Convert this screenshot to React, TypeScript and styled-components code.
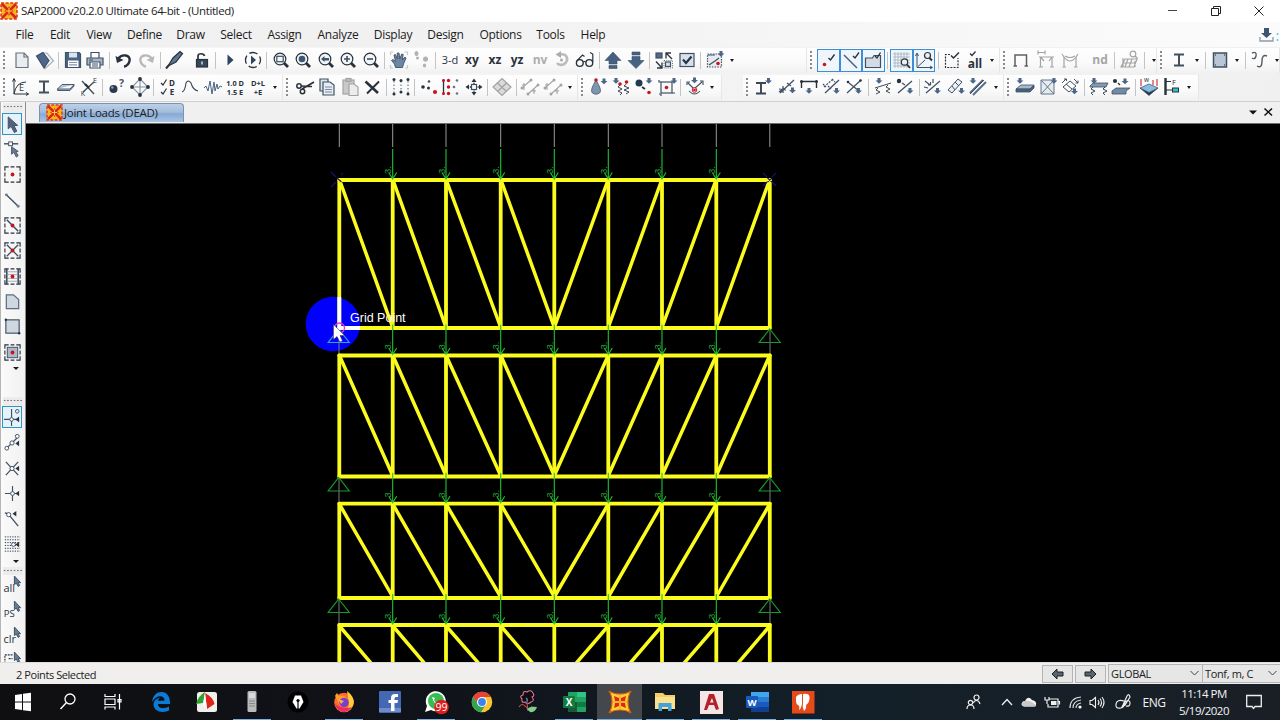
import * as React from 'react'
import styled, { createGlobalStyle } from 'styled-components'

const GlobalStyle = createGlobalStyle`
  * {
    box-sizing: border-box;
  }
  body {
    margin: 0;
    overflow: hidden;
    background: #000;
    font-family: 'Open Sans', 'Noto Sans', sans-serif;
  }
`

const DARK = '#3f5063'
const INK = '#29323c'
const GREY = '#a4a4a4'
const RED = '#c8141c'

/* ---------- layout ---------- */

const Window = styled.div`
  width: 1280px;
  height: 720px;
  display: flex;
  flex-direction: column;
  overflow: hidden;
  background: #f0f0f0;
  color: #1c1c1c;
`

const TitleBar = styled.header`
  height: 22px;
  flex: none;
  display: flex;
  align-items: center;
  padding-left: 1px;
  background: #fff;
`

const TitleText = styled.span`
  flex: 1;
  padding-left: 4px;
  font-size: 11.5px;
  letter-spacing: -0.39px;
  line-height: 22px;
  white-space: nowrap;
`

const WindowButton = styled.span`
  width: 43px;
  height: 20px;
  display: flex;
  align-items: center;
  justify-content: center;
`

const MenuBar = styled.nav`
  height: 25px;
  flex: none;
  display: flex;
  align-items: center;
  padding-left: 7px;
  background: linear-gradient(90deg, #f0f0f0 0, #f1f1f1 30%, #fbfbfb 100%);
`

const MenuItem = styled.span<{ $w: number }>`
  width: ${(props) => props.$w}px;
  text-align: center;
  font-size: 12px;
  letter-spacing: -0.3px;
  white-space: nowrap;
`

const MenuEnd = styled.span`
  margin-left: auto;
  width: 24px;
  height: 20px;
`

const ToolRow = styled.div`
  height: 27px;
  flex: none;
  display: flex;
  padding-top: 1px;
  background: linear-gradient(90deg, #f6f6f6 0, #f3f3f3 60%, #f0f0f0 100%);
`

const Strip = styled.div<{ $w: number; $after?: number }>`
  width: ${(props) => props.$w}px;
  height: 25px;
  margin-right: ${(props) => props.$after || 0}px;
  flex: none;
  display: flex;
  align-items: center;
  overflow: hidden;
  background: linear-gradient(#fefefe, #fafafa 60%, #f1f1f1);
  border-right: 1px solid #e6e6e6;
`

const Grip = styled.span<{ $w: number }>`
  width: ${(props) => props.$w}px;
  height: 21px;
  flex: none;
  background: radial-gradient(circle, #8a8a8a 0.8px, transparent 1.2px) 2px 0 / 4px 4px repeat-y;
`

const ToolButton = styled.span<{ $w: number; $on?: boolean }>`
  width: ${(props) => props.$w}px;
  height: 23px;
  flex: none;
  display: flex;
  align-items: center;
  justify-content: center;
  padding-bottom: ${(props) => (props.$on ? 0 : 1)}px;
  font-size: 12px;
  border: ${(props) => (props.$on ? '1px solid #3c8fd6' : '0')};
  background: ${(props) => (props.$on ? '#eef5fb' : 'transparent')};
`

const Divider = styled.span<{ $w: number; $hidden?: boolean }>`
  width: ${(props) => props.$w}px;
  height: 17px;
  flex: none;
  background: ${(props) =>
    props.$hidden ? 'none' : 'linear-gradient(#c4c4c4, #c4c4c4) center / 1px 100% no-repeat'};
`

const Caret = styled.span<{ $w: number }>`
  width: ${(props) => props.$w}px;
  flex: none;
  display: flex;
  justify-content: center;
  &::after {
    content: '';
    border: 2.5px solid transparent;
    border-top: 3px solid #1b1b1b;
    border-bottom-width: 0;
  }
`

const Body = styled.main`
  height: 561px;
  flex: none;
  display: flex;
  border-top: 1px solid #cfcfcf;
`

const SideBar = styled.aside`
  width: 26px;
  flex: none;
  display: flex;
  flex-direction: column;
  overflow: hidden;
  padding: 1px 2px 0 2px;
  background: linear-gradient(90deg, #fafafa, #f1f1f1);
  border-right: 1px solid #8c8c8c;
  border-left: 1px solid #b5b5b5;
`

const SideGrip = styled.span<{ $h: number }>`
  height: ${(props) => props.$h}px;
  flex: none;
  background: radial-gradient(circle, #777 0.7px, transparent 1.1px) 0 2px / 3.3px 3px repeat-x #ececec;
`

const SideButton = styled.span<{ $on?: boolean }>`
  width: 20px;
  height: 22px;
  margin-bottom: 3.35px;
  margin-left: -1px;
  flex: none;
  display: flex;
  align-items: center;
  justify-content: center;
  border: ${(props) => (props.$on ? '1px solid #2f95c4' : '0')};
  background: ${(props) => (props.$on ? '#e6f2fa' : 'transparent')};
`

const SideCaret = styled.span<{ $h: number }>`
  height: ${(props) => props.$h}px;
  flex: none;
  padding-top: 1px;
  padding-left: 10px;
  &::after {
    content: '';
    display: block;
    width: 0;
    border: 3px solid transparent;
    border-top-color: #1b1b1b;
    border-bottom-width: 0;
  }
`

const Workspace = styled.section`
  flex: 1;
  display: flex;
  flex-direction: column;
`

const TabRow = styled.div`
  height: 22px;
  flex: none;
  display: flex;
  align-items: flex-start;
  padding: 1px 6px 0 13px;
  background: #f0f0f0;
  border-bottom: 1px solid #6e6e6e;
`

const Tab = styled.div`
  width: 145px;
  height: 19px;
  display: flex;
  align-items: center;
  gap: 2px;
  padding-left: 7px;
  padding-bottom: 1px;
  font-size: 11.5px;
  letter-spacing: -0.3px;
  white-space: nowrap;
  border: 1px solid #7c93ae;
  border-bottom: 0;
  border-radius: 4px 4px 0 0;
  background: linear-gradient(#bdd0e8, #a2bddd 45%, #87a9d2 55%, #a9c5e4);
`

const TabTools = styled.span`
  margin-left: auto;
  width: 32px;
  height: 20px;
  margin-top: -2px;
`

const StatusBar = styled.footer`
  height: 22px;
  flex: none;
  display: flex;
  align-items: center;
  font-size: 11px;
  background: #f0efee;
  border-top: 1px solid #dcdcdc;
`

const StatusText = styled.span`
  flex: 1;
  padding-left: 16px;
  padding-top: 1px;
  font-size: 11px;
  letter-spacing: -0.42px;
`

const NavButton = styled.span`
  width: 31px;
  height: 18px;
  margin-right: 2px;
  display: flex;
  align-items: center;
  justify-content: center;
  border: 1px solid #b4b4b4;
  background: #e6e6e6;
`

const Combo = styled.span<{ $w: number }>`
  width: ${(props) => props.$w}px;
  height: 19px;
  display: flex;
  align-items: center;
  justify-content: space-between;
  padding: 0 3px 1px 2px;
  overflow: hidden;
  white-space: nowrap;
  font-size: 11px;
  letter-spacing: -0.35px;
  border: 1px solid #b4b4b4;
  border-right: 0;
  background: #e6e6e6;
`

const TaskBar = styled.div`
  height: 36px;
  flex: none;
  display: flex;
  background: linear-gradient(90deg, #0f0f11 0, #10131a 35%, #132029 65%, #1a1f26 100%);
  color: #f4f4f4;
`

const TaskButton = styled.span<{ $w: number; $open?: boolean; $active?: boolean }>`
  width: ${(props) => props.$w}px;
  height: 36px;
  flex: none;
  display: flex;
  align-items: center;
  justify-content: center;
  background:
    linear-gradient(#76b0e4, #76b0e4) center bottom / ${(props) => (props.$open ? (props.$active ? 45 : 38) : 0)}px 1.5px no-repeat,
    ${(props) => (props.$active ? '#44474b' : 'transparent')};
`

const Tray = styled.div`
  margin-left: auto;
  width: 322px;
  display: flex;
  align-items: center;
`

const TrayItem = styled.span<{ $w: number }>`
  width: ${(props) => props.$w}px;
  flex: none;
  display: flex;
  align-items: center;
  justify-content: center;
  font-size: 12px;
  letter-spacing: -0.4px;
`

const Clock = styled.span`
  width: 58px;
  margin-right: 4px;
  padding-right: 2px;
  text-align: center;
  font-size: 11.5px;
  line-height: 17px;
  letter-spacing: -0.5px;
  white-space: nowrap;
`

/* ---------- icon helpers ---------- */

const Svg = styled.svg`
  display: block;
  flex: none;
  overflow: visible;
`

interface IconProps {
  size?: number,
  children: React.ReactNode
}

const Icon = ({ size = 20, children }: IconProps) => (
  <Svg width={size} height={size} viewBox="0 0 20 20" fill="none" stroke={DARK} strokeWidth="1.2">
    {children}
  </Svg>
)

const Mark = ({ size = 16 }: { size?: number }) => (
  <Svg width={size} height={size} viewBox="0 0 24 24">
    <path d="M1 1C7 5 17 5 23 1C19 7 19 17 23 23C17 19 7 19 1 23C5 17 5 7 1 1Z" fill="#ffd52e" stroke="#dc5b16" strokeWidth="1.2" />
    <path d="M6 6L11 8V11H7ZM18 6L13 8V11H17ZM6 18L11 16V13H7ZM18 18L13 16V13H17Z" fill="#e2251b" />
    <path d="M12 4.500V19.500M5 12H19" stroke="#f08a20" strokeWidth=".8" />
  </Svg>
)

// square version used in the title bar and on the document tab
const SmallMark = ({ size = 15 }: { size?: number }) => (
  <Svg width={size} height={size} viewBox="0 0 16 16">
    <rect width="16" height="16" fill="#f6b61f" />
    <path d="M0 0H16V16H0Z" fill="none" stroke="#e0381a" strokeWidth="1.6" strokeDasharray="3 1.600" />
    <path d="M1 1L15 15M15 1L1 15" stroke="#d8261c" strokeWidth="2.600" />
    <path d="M8 3L9.500 6.500L13 8L9.500 9.500L8 13L6.500 9.500L3 8L6.500 6.500Z" fill="#e02a1b" />
    <path d="M8 5V11M5 8H11" stroke="#ffd83a" />
  </Svg>
)

const Dot = ({ x, y, r = 1.8, c = RED }: { x: number, y: number, r?: number, c?: string }) => (
  <circle cx={x} cy={y} r={r} fill={c} stroke="none" />
)

// small blue arrow used by every "assign" tool
const Down = ({ x, y }: { x: number, y: number }) => (
  <path d={`M${x - 1.5} ${y - 3}h3v2.500h2l-3.500 3.200l-3.500 -3.200h2z`} fill="#4a6788" stroke="none" />
)

const Word = ({ x = 10, y = 14, size = 12, bold, c = INK, children }: { x?: number, y?: number, size?: number, bold?: boolean, c?: string, children: string }) => (
  <text x={x} y={y} fontSize={size} fontWeight={bold ? 700 : 400} textAnchor="middle" fill={c} stroke="none">{children}</text>
)

const Lens = ({ children }: { children?: React.ReactNode }) => (
  <>
    <path d="M13 13L17 17" strokeWidth="2.800" stroke={INK} />
    <circle cx="9" cy="9" r="5.800" fill="#f2f5f8" stroke={INK} strokeWidth="1.200" />
    {children}
  </>
)

const icons: Record<string, React.ReactNode> = {
  file: <path d="M4 3H12L16 7V17.500H4ZM12 3V7H16" fill="#e9edf1" stroke="#68727d" />,
  open: <><path d="M7 3L12 3L18.500 11L10 18.500Z" fill="#f4f7fa" stroke="#a5b0bb" /><path d="M1.500 6L8 2.500L14 10.500L9 18Z" fill="#4b6688" stroke={DARK} /></>,
  save: <><path d="M2.500 2.500H16L17.500 4V17.500H2.500Z" fill="#4b6384" /><rect x="6" y="2.500" width="8" height="5" fill="#dce4ed" stroke="none" /><rect x="5" y="10.500" width="10.500" height="6.500" fill="#fff" stroke="none" /><path d="M6 12.500H14M6 14.800H14" stroke="#8796a8" /></>,
  print: <><path d="M6 8V2.500H14V8" fill="#fff" /><path d="M2 8H18V15H2Z" fill="#a5b6c9" /><path d="M5 12H15V18H5Z" fill="#fff" /><path d="M7 14H13M7 16H13M4 10H8" /></>,
  undo: <><path d="M4 9C8 3 17 5 15.500 11C15 14 12 16.500 10 16.500" stroke={INK} strokeWidth="2.400" /><path d="M1.500 6L3 13L9.500 10Z" fill={INK} stroke="none" /></>,
  redo: <><path d="M16 9C12 3 3 5 4.500 11C5 14 8 16.500 10 16.500" stroke="#b9b9b9" strokeWidth="2.400" /><path d="M18.500 6L17 13L10.500 10Z" fill="#b9b9b9" stroke="none" /></>,
  pen: <><path d="M4 16L9 8L16 1.500L18.500 3.500L12 12Z" fill="#5c7593" stroke={INK} /><path d="M2 18.500L5 15" strokeWidth="2" stroke={INK} /></>,
  lock: <><path d="M6 9V6C6 3 12 3 12.500 6" stroke={INK} strokeWidth="1.700" /><rect x="4.500" y="9.500" width="11" height="7.500" fill="#37475b" stroke={INK} /><rect x="9.300" y="11.500" width="1.400" height="3" fill="#dfe5ec" stroke="none" /></>,
  play: <path d="M7.500 4.500L13.500 10L7.500 15.500Z" fill="#2c4564" stroke="none" />,
  cycle: <><circle cx="10" cy="10" r="7.500" stroke={INK} strokeWidth="1.300" strokeDasharray="8.500 3.280" strokeDashoffset="4" /><path d="M8 5.500L13 10L8 14.500Z" fill="#2c4564" stroke="none" /></>,
  zoomRect: <Lens><rect x="5.800" y="6.300" width="6.400" height="5.400" /></Lens>,
  zoomAll: <Lens><circle cx="9" cy="9" r="3.300" fill="#3f5673" stroke="none" /></Lens>,
  zoomPrev: <Lens><path d="M5 9L8.500 6V8H13V10.500H8.500V12Z" fill="#3f5673" stroke="none" /></Lens>,
  zoomIn: <Lens><path d="M6 9H12M9 6V12" strokeWidth="1.600" /></Lens>,
  zoomOut: <Lens><path d="M6 9H12" strokeWidth="1.600" /></Lens>,
  hand: <><path d="M6.500 17.500L5.500 14L2.500 10.500L4 9.500L6.500 11.500L5 5L6.500 4.500L8.300 9L8.300 3H10L10.800 9L12.700 4L14.200 4.500L13.300 10L16 7L17 8L14.500 14L13.500 17.500Z" fill="#6d86a3" stroke="#3b5069" strokeWidth=".9" /><path d="M1.500 5V2H4.500M15.500 2H18.500V5M1.500 15V18H4M16 18H18.500V15" stroke="#c2c9d0" /></>,
  feet: <><ellipse cx="4.500" cy="3.500" rx="2" ry="2.600" fill="#b2b2b2" stroke="none" /><ellipse cx="5.500" cy="8" rx="1.500" ry="1.500" fill="#b2b2b2" stroke="none" /><ellipse cx="13.500" cy="9" rx="2.500" ry="2.600" fill="#b2b2b2" stroke="none" /><ellipse cx="12.500" cy="15.500" rx="1.600" ry="2" fill="#b2b2b2" stroke="none" /></>,
  d3: <Word size={11}>3-d</Word>,
  xy: <Word size={12} bold>xy</Word>,
  xz: <Word size={12} bold>xz</Word>,
  yz: <Word size={12} bold>yz</Word>,
  nv: <Word size={12} bold c="#adadad">nv</Word>,
  rotate: <><path d="M8 4.500C14.500 3 17 9 13.500 13C10.500 16 6.500 15 5 13" stroke="#bcbcbc" strokeWidth="2.600" /><path d="M9 1L3.500 4.500L9 8Z" fill="#adadad" stroke="none" /><Dot x={9.500} y={10} r={1.500} c="#aaa" /></>,
  glasses: <><circle cx="4.800" cy="13" r="3.400" stroke={INK} strokeWidth="1.400" /><circle cx="14.300" cy="13" r="3.400" stroke={INK} strokeWidth="1.400" /><path d="M8.300 12Q9.500 11 10.800 12M1.800 11L7.500 5L9.500 6.500M17.800 12V4L15 2.500" stroke={INK} /></>,
  up: <path d="M10 2L18 10.500H14V14H6V10.500H2ZM6 15.500H14V18.500H6Z" fill="#476181" stroke="#3a4f69" strokeWidth=".6" />,
  down: <path d="M10 18.500L18 10.500H14V6.500H6V10.500H2ZM6 2H14V5H6Z" fill="#476181" stroke="#3a4f69" strokeWidth=".6" />,
  shrink: <><rect x="2" y="3" width="6" height="5" fill="#536b8b" /><path d="M12 8.500V3H17M12 3L18 9M2 11.500L8 18M8 12.500V18H3" stroke={INK} strokeWidth="1.300" /><rect x="11.500" y="12" width="5" height="4.500" fill="#d8dfe8" /><path d="M10 10.500H18.500V18H10Z" strokeDasharray="1 1.200" strokeWidth=".8" /></>,
  check: <><rect x="3" y="3.500" width="14" height="13" fill="#d9e1ea" /><path d="M6 9.500L9 13L14.500 6.500" stroke="#27374b" strokeWidth="2.200" /></>,
  setView: <><rect x="2.500" y="4" width="14" height="13" strokeDasharray="1.500 1.200" fill="#e7ebf0" /><path d="M3 5H10M4 15L10 11L14 8" /><Down x={16} y={4} /><Dot x={13} y={13.500} /></>,
  jointOn: <><Dot x={6.500} y={13.500} /><path d="M10.500 7L12.500 9L16.500 3.500" stroke={INK} strokeWidth="1.400" /></>,
  lineOn: <><path d="M3 4L16 17" stroke="#4a6380" strokeWidth="1.500" /><path d="M12 5L14 7L18 1.500" stroke={INK} strokeWidth="1.300" /></>,
  areaOn: <><path d="M2.500 7H9.500L11 4.500H17.500V16.500H2.500Z" fill="#d4dbe5" /><path d="M12 5L14 7L17.500 1.500" stroke={INK} strokeWidth="1.300" /></>,
  grid: <><path d="M1 3H18M1 6H18M1 9H18M1 12H18M1 15H18M3 1V17M6 1V17M9 1V17M12 1V17M15 1V17" stroke="#a5afbb" strokeWidth=".8" /><circle cx="12.500" cy="11" r="3.200" fill="#eee" stroke={INK} /><path d="M15 13.500L18 17" stroke={INK} strokeWidth="1.800" /></>,
  axes: <><path d="M3 3V16.500H18M4 15.500L11 9M1.500 5L3 2L4.500 5M16 15L18.500 16.500L16 18" strokeWidth="1" /><circle cx="13.500" cy="4.500" r="3" fill="#eee" stroke={INK} /><path d="M15.500 7L18 9.500" stroke={INK} strokeWidth="1.800" /></>,
  selRect: <><path d="M8 4.500H3.500V17.500H16V8" stroke={INK} strokeDasharray="2 1.200" /><path d="M9 5.500L11.500 8L17 2.500" stroke={INK} strokeWidth="1.500" /></>,
  selAll: <><Word y={17.500} size={12} bold>all</Word><path d="M5 3.500L7 5.500L10.500 1.500" stroke={INK} strokeWidth="1.300" /></>,
  frame: <path d="M4 16V5H15.500V16M2.500 16H6M13.500 16H17" stroke="#5d6166" strokeWidth="1.500" />,
  frameDim: <path d="M4.500 17V7H16V17M2 2.500H9M2 .5V4.500M9 .5V4.500M3 17H7M14 17H18M4.500 7L8 11M16 7L13 11M3 7H18" stroke={GREY} />,
  frameBend: <path d="M4 17V7Q10 15 16 7V17M4 7L2 4M16 7L18 4M2.500 17H6M14 17H17.500M5 6Q10 9 15 6" stroke={GREY} />,
  nd: <Word size={12} c="#a5a5a5" bold>nd</Word>,
  mesh: <><path d="M1 17L5 9H17L14 17ZM3 13H16M8 9L5 17M12 9L9 17M3 8V17M15 11V17" stroke={GREY} /><circle cx="13" cy="4" r="2.800" stroke={GREY} /><path d="M15 6L17.500 8.500" stroke={GREY} strokeWidth="1.500" /></>,
  ibeam: <path d="M5 4.500H15M5 15.500H15M10 4.500V15.500" stroke="#44505e" strokeWidth="2" />,
  slab: <><rect x="3.500" y="3" width="13" height="14" fill="#b9c6d6" strokeWidth="1.500" /><path d="M5 5H6M14 5H15M5 15H6M14 15H15" stroke="#222" /></>,
  spline: <path d="M2 3Q7 1 6 6Q5 10 2 8M7 16Q12 19 12 11Q12 4 17 6" stroke="#4e5a68" strokeWidth="1.400" />,
  func: <><path d="M3 2V17H17.500M1.500 4.500L3 1.500L4.500 4.500M15 15.500L17.500 17L15 18.500M3 17Q5 5 15 5" stroke={INK} strokeWidth="1" /><Word x={10.500} y={14} size={9}>E</Word></>,
  plate: <path d="M1.500 12L6 7.500H18L14 12ZM1.500 12V13.500H14L18 9V7.500" fill="#b5c3d2" stroke="#465a70" strokeWidth="1" />,
  coords: <><path d="M3 4L15 17M15 5L4 15" strokeWidth="1.400" /><path d="M6 7L10 11" strokeWidth="2.200" stroke={INK} /><Word x={16} y={5.500} size={7}>E</Word><Word x={4} y={19} size={7}>K</Word></>,
  ball: <><Dot x={6.500} y={12} r={4} c="#293a50" /><Dot x={5.300} y={10.500} r={1.200} c="#8fa3bb" /><Word x={14.500} y={10} size={10.500} bold c="#42566e">?</Word></>,
  diamond: <><path d="M10 2L18 10L10 18L2 10ZM10 2V18M2 10H18" stroke="#8494a7" strokeWidth="1.100" />{[[10, 2], [18, 10], [10, 18], [2, 10]].map(([x, y]) => <Dot key={`${x}-${y}`} x={x} y={y} r={1.900} c={INK} />)}</>,
  de: <><Word x={14} y={8.500} size={8} bold>D</Word><Word x={14} y={17.500} size={8} bold>E</Word><path d="M3 6L5 8L8.500 2.500M3 15L5 17L8.500 11.500" stroke={INK} /></>,
  curve: <path d="M2 15Q5 14 6 6Q8 2 11 6Q13 13 18 14" stroke="#3d4753" strokeWidth="1.100" />,
  wave: <path d="M1 11L3 9L5 14L7 4L9 17L11 5L12 14L14 7L15 12L17 9L19 10" stroke="#4a6380" strokeWidth="1" />,
  combo1: <><Word y={9} size={7.300} bold>1.0 D</Word><Word y={17.500} size={7.300} bold>1.5 E</Word></>,
  combo2: <><Word y={9} size={7.500} bold>D+L</Word><Word y={17.500} size={7.500} bold>+E</Word></>,
  cut: <><path d="M19 5L7 12M17 9.500L6 9" stroke={INK} strokeWidth="1.700" /><circle cx="4" cy="9" r="2.200" stroke={INK} strokeWidth="1.500" /><circle cx="7.500" cy="14.500" r="2.200" stroke={INK} strokeWidth="1.500" /></>,
  copy: <><path d="M3 2H11V14H3Z" fill="#dce4ed" /><path d="M6 5H13L17 8V18H6Z" fill="#e7edf3" /><path d="M8 10H15M8 12.500H15M8 15H15" stroke="#7a8ca1" /></>,
  paste: <><rect x="3" y="3" width="11" height="14" fill="#c9c9c9" stroke={GREY} /><rect x="6" y="1.500" width="5" height="3" fill="#bbb" stroke={GREY} /><path d="M9 7H14L18 10V18.500H9Z" fill="#ececec" stroke={GREY} /></>,
  del: <><path d="M3.500 4.500L16 16" stroke={INK} strokeWidth="2.600" /><path d="M17 4.500L5 16.500" stroke={INK} strokeWidth="1.900" /></>,
  points: <><path d="M3 4V16M10 4V16M17 4V16" strokeDasharray="1.500 2" strokeWidth=".9" />{[3, 10, 17].map((x) => <g key={x}><Dot x={x} y={x === 10 ? 3.500 : 2.500} r={1.500} c={INK} /><Dot x={x} y={x === 10 ? 15 : 17} r={1.500} c={INK} /></g>)}</>,
  scatter: <><Dot x={4} y={10} c={INK} /><Dot x={10} y={4.500} c={DARK} r={1.300} /><Dot x={9.500} y={11} c={INK} r={1.500} /><Dot x={16} y={15} r={2.100} /></>,
  mirror: <><path d="M2.500 2V18" stroke={INK} strokeWidth="1.300" />{[3.500, 10, 16.500].map((y) => <g key={y}><Dot x={7.500} y={y} r={1.700} /><Dot x={y === 10 ? 13 : 16} y={y} r={1.300} c="#62758b" /></g>)}<Dot x={2.500} y={3.500} r={1.500} /><Dot x={2.500} y={16.500} r={1.500} /></>,
  move: <><path d="M10 3V17M3 10H17" stroke={INK} strokeWidth="1.300" strokeDasharray="2 .8" /><path d="M10 1.500L12.500 5H7.500ZM10 18.500L7.500 15H12.500ZM1.500 10L5 7.500V12.500ZM18.500 10L15 12.500V7.500Z" fill={INK} stroke="none" /><rect x="7.500" y="7.500" width="5" height="5" fill="#fff" /></>,
  panels: <path d="M10 1.500L19 10L10 18.500L1 10ZM5.500 6L14.500 14.500M14.500 6L5.500 14.500" fill="#dadada" stroke={GREY} />,
  divide: <><path d="M2 11L11 3M8 17L18 8M4 6V13M2 8H6M14 11V17M12 14H16" stroke={GREY} strokeWidth="1.100" /><Dot x={2} y={11} r={1.500} c={GREY} /><Dot x={11} y={3} r={1.500} c={GREY} /><Dot x={8} y={17} r={1.500} c={GREY} /><Dot x={18} y={8} r={1.500} c={GREY} /></>,
  drop: <><path d="M7 3Q1 13 3 15.500Q7 19 11 15.500Q13 13 7 3Z" fill="#7f95ae" stroke="#50657e" strokeWidth=".9" /><Dot x={7} y={3} /><Down x={15} y={4.500} /></>,
  springs: <><Down x={4} y={4} /><Dot x={8} y={7} /><Dot x={14.500} y={5} /><path d="M8 8L6 10L10 12L6 14L10 16L8 18M14.500 7L12 9L17 11L12 13L17 15L14 17" stroke={INK} strokeWidth=".9" /></>,
  masses: <><Dot x={5} y={6} r={3.500} c="#26384d" /><path d="M8 10L11 12" stroke={INK} strokeWidth="2" /><Dot x={15} y={15.500} /><Down x={15} y={4} /></>,
  panelZone: <><rect x="4" y="5" width="11" height="11" fill="#f5f7f9" /><Dot x={9.500} y={10.500} /><path d="M2 3V5H4M2 17H4V19M15 16H18" /><Down x={17} y={4} /></>,
  jointLoad: <><path d="M3 6L9 12L17 5M2 8V5H5M18 8V4H15M4 14Q9.500 20 15 14" strokeWidth="1.100" /><Down x={9.500} y={3.500} /><circle cx="9.500" cy="13" r="2.300" fill="#fff" stroke={RED} strokeWidth="1" /><Dot x={9.500} y={13} r={1.300} /></>,
  secAssign: <><path d="M2 6H12M2 16.500H12M7 6V16.500" stroke="#3a4654" strokeWidth="1.900" /><Down x={14.500} y={4} /></>,
  release: <><path d="M3 16L17 3M10 6L14 9M2 15L7 11M2 12L9 13M6 9L6 16" strokeWidth="1.200" /><Down x={15.500} y={13.500} /></>,
  offset: <><path d="M2.500 11V4.500H17.500V11" strokeWidth="1.400" stroke={INK} /><Dot x={2.500} y={4.500} c={INK} r={1.500} /><Dot x={17.500} y={4.500} c={INK} r={1.500} /><Down x={10} y={14} /></>,
  hatch: <><path d="M3 16L17 3" strokeWidth="1.300" /><path d="M2 10L11 2M6 9L9 12M1 7L4 10M10 2L13 5" strokeDasharray="2 1.200" /><Down x={14.500} y={14} /></>,
  cross: <><path d="M3 16L17 3M5 6L15 14" strokeWidth="1.200" /><Dot x={4} y={5} c={INK} r={1.300} /><Dot x={16.500} y={3.500} c={INK} r={1.300} /><Down x={14.500} y={14} /></>,
  lineSpring: <><path d="M2 11L18 6M5 11L3 13L7 15L3 17M15 8L13 10L17 12L13 14L17 16" stroke={INK} strokeWidth=".9" /><Down x={6} y={4} /></>,
  lineMass: <><Dot x={4} y={4} r={2.200} c={INK} /><path d="M3 16L17 4M7 6L10 8" strokeWidth="1.300" /><Down x={15} y={14} /></>,
  lineLoad: <><path d="M3 16L17 4M2 4L7 8M5 8H7.500V5M10 2V6M1 10L5 11" strokeWidth="1.200" /><Down x={14.500} y={14} /></>,
  distLoad: <><path d="M2 13L12 2L16 5L6 16ZM6 9L9 13M9 5L13 9" fill="#edf1f5" strokeWidth="1" /><Down x={15.500} y={14} /></>,
  temp: <><path d="M2 16L15 3M5 18L18 5" stroke="#5a6f89" strokeWidth="2" /><path d="M2 17L16 3" stroke={INK} strokeWidth=".8" /><Down x={5} y={4} /></>,
  areaSec: <><path d="M1 12L6 8H19L15 12Z" fill="#a8b8ca" strokeWidth=".8" /><path d="M1 12V15H15L19 11V8L15 12Z" fill="#48617f" strokeWidth=".8" /><Down x={5} y={4} /></>,
  areaBox: <><path d="M3 3H16V17H3ZM3 3L16 17M16 3L3 17" fill="#e6ebf0" stroke="#60748b" strokeWidth="1" /><Down x={16} y={4} /></>,
  areaRot: <><path d="M3 10L10 4L16 9L9 15ZM6 7L12 12M2 6L6 2M14 2L18 6M4 2H6.500V4M18 3.500V6H15.500" strokeWidth="1" /><Down x={14.500} y={14.500} /></>,
  areaSpring: <><path d="M1 9L4 6H19L17 10H1Z" fill="#8399b2" strokeWidth=".8" /><path d="M4 10L2 12L6 14L2 16L4 18M16 10L14 12L18 14L14 16L16 18" stroke={INK} strokeWidth=".9" /><Down x={5} y={4} /></>,
  areaMass: <><path d="M1 14L5 11H19L15 14V17H1Z" fill="#718aa6" strokeWidth=".8" /><Dot x={4} y={4} r={2.100} c={INK} /><path d="M7 6L9 8" stroke={INK} /><Down x={14} y={4.500} /></>,
  areaLoad: <><path d="M1 11L10 15L19 11L10 18.500Z" fill="#22384f" strokeWidth=".7" /><path d="M1 11L10 7L19 11L10 15.500Z" fill="#8abde0" strokeWidth=".7" /><path d="M2 2V9M18 2V9M14 3V8" stroke={RED} strokeWidth="1" /><Word x={7.500} y={5} size={6.500}>w</Word></>,
  cable: <><path d="M3.500 1V18" stroke={INK} strokeWidth="2.400" /><path d="M4 4.500H9M4 13H10" stroke={INK} strokeWidth="1" /><Word x={12} y={7.500} size={7.500}>F</Word><rect x="10.500" y="11" width="6" height="4" fill="#2fc4c4" stroke={INK} strokeWidth="1" /></>,
}

const PICK = <path d="M12 0V9L14 7.500L16 11L17.500 10L16 7H18.500Z" fill="#687c95" strokeWidth="1" />
const FENCE = <path d="M2 6V2H6M14 2H18V6M18 14V18H14M6 18H2V14M8 2H12M8 18H12M2 8V12M18 8V12" stroke={INK} strokeWidth="1.200" />

const sideIcons: Record<string, React.ReactNode> = {
  pointer: <path d="M5.500 2V14.500L8.500 12L12 18.500L14.500 17L11.500 11H15.500Z" fill="#53647a" stroke={DARK} strokeWidth="1" />,
  reshape: <><path d="M1 4H16" strokeWidth="1.500" /><rect x="6" y="2" width="4" height="4" fill="#fff" strokeWidth="1" /><path d="M9 7V15L11.500 13L14 18L16 16.500L13.500 12H16Z" fill="#697a90" strokeWidth=".9" /></>,
  joint: <>{FENCE}<Dot x={10} y={10} r={2} /></>,
  frame: <><path d="M3.500 4L16 16" strokeWidth="1.500" /><Dot x={3.500} y={4} c="#6d7c8e" r={1.500} /><Dot x={16} y={16} c="#6d7c8e" r={1.500} /></>,
  quickFrame: <>{FENCE}<path d="M4 4L16 16" strokeWidth="1.600" /><Dot x={10} y={10} r={2} /></>,
  brace: <>{FENCE}<path d="M4 4L16 16M16 4L4 16" strokeWidth="1.400" /><Dot x={10} y={10} r={2} /></>,
  beams: <>{FENCE}<path d="M4 2V18M16 2V18" strokeWidth="1.700" /><path d="M5 5H15M5 8H15M5 12H15M5 15H15" stroke="#9ea9b5" strokeWidth="1" /><Dot x={10} y={10} r={2} /></>,
  poly: <path d="M3.500 3H11L16.500 8V17.500H3.500Z" fill="#cfd7e1" stroke="#5e6d80" strokeWidth="1.300" />,
  rect: <><rect x="3" y="3" width="14" height="14" fill="#cfd7e1" /><Dot x={3} y={3} c={INK} r={1.300} /><Dot x={17} y={17} c={INK} r={1.300} /></>,
  quickArea: <>{FENCE}<rect x="4.500" y="4.500" width="11" height="11" fill="#abb9c9" strokeWidth="1" /><Dot x={10} y={10} r={2} /></>,
  snapJoint: <><path d="M9 1V19M1 12H15" strokeWidth="1.200" /><circle cx="9" cy="12" r="1.900" fill="#fff" strokeWidth="1" /><circle cx="15" cy="3.500" r="1.900" strokeWidth="1" /><path d="M13 12L17 9V15Z" fill={INK} stroke="none" /></>,
  snapMid: <><path d="M4 16L15 5" strokeWidth="1.200" /><circle cx="4" cy="16" r="2" fill="#fff" strokeWidth="1" /><circle cx="15" cy="3.500" r="2" fill="#fff" strokeWidth="1" /><circle cx="9.500" cy="10.500" r="2.200" fill="#fff" strokeWidth="1" /><path d="M13 11L17 8V14Z" fill={INK} stroke="none" /></>,
  snapCross: <><path d="M3 3L16 17M16 3L3 17" strokeWidth="1.300" /><circle cx="9.500" cy="10" r="2.200" fill="#fff" strokeWidth="1" /><path d="M13 10L17 7V13Z" fill={INK} stroke="none" /></>,
  snapPerp: <><path d="M10 2V18M2 10H14" strokeWidth="1.200" /><circle cx="10" cy="10" r="2" fill="#fff" strokeWidth="1" /><path d="M13 10L17 7V13Z" fill={INK} stroke="none" /></>,
  snapLine: <><path d="M7 7L16 18M2 4L5 5" strokeWidth="1.400" /><circle cx="6" cy="6" r="2.200" fill="#fff" strokeWidth="1" /><path d="M10 5L14 2V8Z" fill={INK} stroke="none" /></>,
  snapGrid: <><path d="M2 2H18M2 5H18M2 8H18M2 11H18M2 14H18M2 17H18" stroke={INK} strokeDasharray="1.300 1.300" strokeWidth="1" /><circle cx="11" cy="10" r="2" fill="#fff" strokeWidth="1" /><path d="M13 10L17 7V13Z" fill={INK} stroke="none" /></>,
  all: <><Word x={6.500} y={17} size={11.5}>all</Word>{PICK}</>,
  ps: <><Word x={6.500} y={17} size={10}>PS</Word>{PICK}</>,
  clr: <><Word x={7} y={17} size={11.5}>clr</Word>{PICK}</>,
  more: <><path d="M2 3H11M2 4V12M6 7H10" stroke={INK} strokeDasharray="2 1" />{PICK}</>,
}

/* ---------- toolbars ---------- */

interface ToolStripProps {
  width: number,
  after?: number,
  grip?: number,
  button?: number,
  // tool names, "|" divider, "_" blank gap, "v" caret, leading "*" means pressed
  items: string
}

const ToolStrip = ({ width, after, grip = 10, button = 22.5, items }: ToolStripProps) => (
  <Strip $w={width} $after={after}>
    <Grip $w={grip} />
    {items.split(' ').map((item, i) => {
      if (item === '|' || item === '_') {
        return <Divider key={i} $w={item === '|' ? 5.8 : 4.8} $hidden={item === '_'} />
      }
      if (item === 'v') {
        return <Caret key={i} $w={12} />
      }
      const name = item.replace('*', '')
      return (
        <ToolButton key={i} $w={button} $on={item[0] === '*'}>
          <Icon>{icons[name]}</Icon>
        </ToolButton>
      )
    })}
  </Strip>
)

/* ---------- model view ---------- */

const COLS = [339.3, 392.7, 446, 500.7, 554.3, 608.3, 662, 716.3, 769.8]
const FLOORS = [
  { top: 180, bottom: 328 },
  { top: 355.5, bottom: 476.5 },
  { top: 503.7, bottom: 598 },
  { top: 625, bottom: 690 },
]

const Canvas = styled.svg`
  display: block;
  flex: none;
  background: #000;
`

const Truss = ({ top, bottom }: { top: number, bottom: number }) => (
  <g stroke="#fbfb1e" strokeWidth="3.8" strokeLinecap="round">
    <path d={`M${COLS[0]} ${top}H${COLS[8]}M${COLS[0]} ${bottom}H${COLS[8]}`} />
    {COLS.map((x) => <path key={x} d={`M${x} ${top}V${bottom}`} />)}
    {COLS.slice(0, 8).map((x, i) => {
      const left = i < 4
      return (
        <path
          key={x}
          strokeWidth="3.500"
          d={`M${x + (left ? 1 : 0.5)} ${left ? top + 2 : bottom - 2}L${COLS[i + 1] - (left ? 0.5 : 1)} ${left ? bottom - 2 : top + 2}`}
        />
      )
    })}
  </g>
)

const Load = ({ x, y }: { x: number, y: number }) => (
  <g stroke="#1fc436" strokeWidth="1.100">
    <path d={`M${x} ${y - 31}V${y - 1}M${x - 4} ${y - 7.5}L${x} ${y - 1}L${x + 4} ${y - 7.5}`} />
    <text
      transform={`translate(${x - 1.5} ${y - 6}) rotate(-90)`}
      fontFamily="Liberation Sans"
      fontSize="9.500"
      fill="#1fa430"
      stroke="none"
    >
      3.
    </text>
  </g>
)

const Support = ({ x, y, color = '#159a2b' }: { x: number, y: number, color?: string }) => (
  <path d={`M${x} ${y + 2}L${x + 10.5} ${y + 15.5}H${x - 10.5}Z`} stroke={color} strokeWidth="1.200" />
)

const ModelView = () => (
  <Canvas width="1254" height="538" viewBox="26 124 1254 538" fill="none">
    {COLS.map((x) => <path key={x} d={`M${x} 124V147`} stroke="#9a9a9a" />)}
    <circle cx="333" cy="324" r="27.300" fill="#0000fb" />
    {[339, 770].map((x) => (
      <path key={x} d={`M${x} 328V356M${x} 476V504M${x} 598V625`} stroke="#7d7d7d" />
    ))}
    {FLOORS.map((floor) => <Truss key={floor.top} {...floor} />)}
    {FLOORS.map((floor) => COLS.slice(1, 8).map((x) => <Load key={`${x}-${floor.top}`} x={x} y={floor.top} />))}
    {FLOORS.slice(0, 3).map((floor) => (
      <g key={floor.top}>
        <Support x={338.7} y={floor.bottom - 1} color={floor.top === 180 ? '#2aa3e0' : undefined} />
        <Support x={769.7} y={floor.bottom - 1} />
      </g>
    ))}
    <path d="M331 172L336 177M331 187L336 182M343 173L341 175M763 173L767 177M776 173L772 177M763 186L767 182M776 186L772 182" stroke="#15126e" strokeWidth="1.200" />
    <path d="M337 178L341.500 182M767.500 178L772 182M772 178L767.500 182" stroke="#15126e" strokeWidth="1.100" />
    <path d="M339.300 297V328H360" stroke="#fff" strokeWidth="3.800" />
    <circle cx="339.500" cy="328" r="5" stroke="#f02fd0" strokeWidth="1.300" />
    <text x="350" y="321.500" fontFamily="Liberation Sans" fontSize="12.500" fill="#fff">Grid Point</text>
    <path d="M333.500 324.500V339.500L337 336.500L340 342L342.500 341L340 335.500H344.500Z" fill="#fff" stroke="#333" strokeWidth=".5" />
  </Canvas>
)

/* ---------- task bar ---------- */

const taskIcons: { w: number, open?: boolean, active?: boolean, art: React.ReactNode }[] = [
  { w: 45, art: <path d="M2 5L9 4V11.500H2ZM10 3.800L18 2.700V11.500H10ZM2 12.500H9V20L2 19ZM10 12.500H18V21.300L10 20.200Z" fill="#fff" transform="translate(0 -2)" /> },
  { w: 45, art: <><circle cx="12" cy="7" r="5" fill="none" stroke="#fff" strokeWidth="1.300" /><path d="M8.500 10.500L2.500 17" stroke="#fff" strokeWidth="1.400" /></> },
  { w: 46, art: <path d="M2 2V4.500H12V2M2 7H12V12.500H2ZM2 17.500V15H12V17.500M16.500 2V17.500M15 7.500H18V10H15Z" fill="none" stroke="#fff" strokeWidth="1.200" /> },
  { w: 49, art: <path d="M1 10C2 3 6 0 10.500 0C16 0 19 5 19 10.500V12H7C7 17 13.500 17 18 14.500V18.500C12 21.500 2.500 20 2.500 12C3 8 7 6 9 5.500C7.500 7 7 8 7 8.800H13.500C14 2.500 5 2.500 1 10Z" fill="#0c7bd8" /> },
  { w: 44, art: <><rect x="0" y="0" width="20" height="20" rx="2.500" fill="#f1f0ec" /><path d="M8 0Q1 4 -1 12L6 11Z" fill="#2fa032" /><path d="M8 1Q16 5 17.500 12L10 17Z" fill="#dc2418" /><path d="M8 1L6 13L10 17Z" fill="#fff" /></> },
  { w: 46, open: true, art: <><rect x="5.500" y="-1" width="9" height="21" rx="1.500" fill="#b9bab9" /><rect x="7" y="1" width="6" height="5" fill="#d9dad8" /><path d="M7 9H13M7 11.500H13M7 14H13" stroke="#888" /></> },
  { w: 46, art: <><circle cx="10" cy="10" r="10.500" fill="#000" /><path d="M7 3.500H13L15.500 10L11.500 16.500H8.500L4.500 10Z" fill="#fff" /><path d="M10 9V17" stroke="#000" strokeWidth="1.200" /><circle cx="10" cy="8.500" r="1.600" fill="#000" /></> },
  { w: 46, open: true, art: <><circle cx="10" cy="10.500" r="9.800" fill="#ff6a2b" /><path d="M13 -1Q21 5 19.500 12Q17 19 10 20Q15 17 15 11Z" fill="#ffcf37" /><path d="M1 4Q2 2 3 1L5 4Q11 2 14 8Q15 15 9 15Q5 14 4 10Z" fill="#ff9a2e" /><circle cx="10" cy="10.500" r="4.700" fill="#7a3fd0" /><path d="M4 7L10 9L7 12Z" fill="#ffad35" /><path d="M1 12Q3 19 10 20.300Q16 19 18 15Q10 18 1 12Z" fill="#ee2c64" /></> },
  { w: 46, art: <><rect x="-1" y="-1" width="22" height="22" rx="1" fill="#4568b2" /><path d="M-1 16H21V20H-1Z" fill="#6e8cc9" /><path d="M11 19V11H8.500V8H11V6Q11 2 15 2H18V5H16Q14.500 5 14.500 6.500V8H18L17.500 11H14.500V19Z" fill="#fff" /></> },
  { w: 46, open: true, art: <><path d="M-1 20L1 14A10 10 0 1 1 5 18Z" fill="#fff" /><circle cx="10" cy="9" r="8" fill="#36be50" /><path d="M6 5Q8 13 14 13L13 10L10 11L8 8L9 6Z" fill="#fff" /><circle cx="15.500" cy="15" r="7.300" fill="#df1f1f" /><text x="15.500" y="19" fontSize="10.500" fill="#fff" textAnchor="middle">99</text></> },
  { w: 46, art: <><circle cx="10" cy="10" r="10.300" fill="#fbc52d" /><path d="M1 5A10.300 10.300 0 0 1 19 5H10Q6 6 5 11Z" fill="#e44437" /><path d="M1 5A10.300 10.300 0 0 0 9 20.300L13.500 13L6 12Z" fill="#32a452" /><circle cx="10" cy="10" r="5" fill="#fff" /><circle cx="10" cy="10" r="3.900" fill="#4181ee" /></> },
  { w: 46, art: <><path d="M5 3Q5-2 9 0Q13-3 15 1Q17 4 14 5Q17 9 13 10Q10 13 7 10Q3 11 4 7Q1 4 5 3Z" fill="#150a10" stroke="#dc7894" strokeWidth="1.100" /><path d="M1 15Q4 10 8 15T14 14M9 11L10 19" fill="none" stroke="#c94f55" strokeWidth="1.100" /><path d="M8 6Q10 7 9 10" fill="none" stroke="#439ec9" strokeWidth="1.200" /><path d="M9 17Q12 14 19 15Q17 21 12 20Z" fill="#83cd8b" /></> },
  { w: 46, open: true, art: <><rect x="4" y="0" width="18" height="20" rx="1" fill="#21a366" /><path d="M4 10H13V20H4Z" fill="#185c37" /><path d="M13 10H22V15H13Z" fill="#107c41" /><path d="M13 0H22V5H13Z" fill="#33c481" /><rect x="-1" y="4" width="12" height="12" rx="1" fill="#107c41" /><text x="5" y="14" fontSize="10" fontWeight="700" fill="#fff" textAnchor="middle">X</text></> },
  { w: 45, open: true, active: true, art: null },
  { w: 46, open: true, art: <><path d="M0 1H8L10 3H20V17H0Z" fill="#f3cf66" /><path d="M0 5H20V17H0Z" fill="#fbe08f" /><path d="M3.500 11H16.500V19H13V15H7V19H3.500Z" fill="#43a2d9" /></> },
  { w: 46, open: true, art: <><rect x="-1" y="-1" width="23" height="23" fill="#f3e6e5" /><path d="M3 18L8 2H13L18 17L15 18L13 13H8L6 18ZM9 10.500H12.500L11 6Z" fill="#b42129" /></> },
  { w: 46, open: true, art: <><rect x="4" y="0" width="18" height="20" rx="1" fill="#2b7cd3" /><path d="M4 0H22V5H4Z" fill="#41a5ee" /><path d="M4 10H22V20H4Z" fill="#185abd" /><path d="M4 15H22V20H4Z" fill="#103f91" /><rect x="-1" y="4" width="12" height="12" rx="1" fill="#185abd" /><text x="5" y="14" fontSize="9.500" fontWeight="700" fill="#fff" textAnchor="middle">W</text></> },
  { w: 46, open: true, art: <><rect x="-1" y="-1" width="22.500" height="22.500" fill="#e64a19" /><path d="M3 5Q5 2 9 2V12Q8 17 6 18Q7 14 5 13Q3 12 3 9ZM10 2Q16 1 16.500 5Q17 10 13 13Q14 16 11 19Q9 15 10 11Z" fill="#fff" /></> },
]

const menus: [string, number][] = [
  ['File', 35], ['Edit', 36], ['View', 42], ['Define', 49], ['Draw', 43], ['Select', 48], ['Assign', 49],
  ['Analyze', 58], ['Display', 52], ['Design', 53], ['Options', 57], ['Tools', 43], ['Help', 42],
]

const Chevron = () => (
  <Svg width="9" height="6" viewBox="0 0 9 6"><path d="M.5 1L4.500 5L8.500 1" fill="none" stroke="#444" /></Svg>
)

const App: React.FC = () => {
  return (
    <Window>
      <GlobalStyle />
      <TitleBar>
        <SmallMark size={16} />
        <TitleText>SAP2000 v20.2.0 Ultimate 64-bit - (Untitled)</TitleText>
        <WindowButton><Svg width="10" height="10"><path d="M0 4.500H9" stroke="#444" /></Svg></WindowButton>
        <WindowButton><Svg width="10" height="10"><path d="M.5 2.500H7.500V9.500H.5ZM2.500 2.500V.5H9.500V7.500H7.500" fill="none" stroke="#222" /></Svg></WindowButton>
        <WindowButton><Svg width="10" height="10"><path d="M.5 .5L9.500 9.500M9.500 .5L.5 9.500" stroke="#222" /></Svg></WindowButton>
      </TitleBar>
      <MenuBar>
        {menus.map(([label, w]) => <MenuItem key={label} $w={w}>{label}</MenuItem>)}
        <MenuEnd>
          <Svg width="24" height="20" viewBox="0 0 24 20">
            <path d="M8 3H13V8H16L10.500 13L5 8H8Z" fill="#3d5571" />
            <path d="M4 12V16H17V12" fill="none" stroke="#8c9aa9" strokeWidth="1.300" />
            <path d="M21.500 8V10M21.500 14V16" stroke="#4fd0c4" strokeWidth="1.500" />
          </Svg>
        </MenuEnd>
      </MenuBar>
      <ToolRow>
        <ToolStrip
          width={807}
          grip={10.8}
          items="file open | save print | undo redo | pen _ lock | play cycle | zoomRect zoomAll zoomPrev zoomIn zoomOut | hand feet | d3 xy xz yz nv rotate glasses | up down | shrink check | setView v"
        />
        <ToolStrip width={193} items="*jointOn *lineOn *areaOn | *grid *axes | selRect selAll v" />
        <ToolStrip width={157} grip={9} button={24.5} items="frame frameDim frameBend _ nd | mesh | v" />
        <ToolStrip width={123} grip={11} items="ibeam v | slab v | spline v" />
      </ToolRow>
      <ToolRow>
        <ToolStrip width={283} grip={10} items="func ibeam plate coords | ball diamond | de curve wave combo1 combo2 v" />
        <ToolStrip width={295} grip={10.500} items="cut copy paste del | points | scatter mirror move | panels | divide divide v" />
        <ToolStrip width={144} after={21} items="drop springs masses panelZone | jointLoad v" />
        <ToolStrip width={261} items="secAssign release offset hatch cross | lineSpring lineMass | lineLoad distLoad temp v" />
        <ToolStrip width={195} items="areaSec areaBox areaRot | areaSpring areaMass | areaLoad cable v" />
      </ToolRow>
      <Body>
        <SideBar>
          <SideGrip $h={10} />
          {['pointer', 'reshape', 'joint', 'frame', 'quickFrame', 'brace', 'beams', 'poly', 'rect', 'quickArea'].map((name) => (
            <SideButton key={name} $on={name === 'pointer'}><Icon size={19}>{sideIcons[name]}</Icon></SideButton>
          ))}
          <SideCaret $h={31} />
          <SideGrip $h={9} />
          {['snapJoint', 'snapMid', 'snapCross', 'snapPerp', 'snapLine', 'snapGrid'].map((name) => (
            <SideButton key={name} $on={name === 'snapJoint'}><Icon size={19}>{sideIcons[name]}</Icon></SideButton>
          ))}
          <SideCaret $h={8} />
          <SideGrip $h={8} />
          {['all', 'ps', 'clr', 'more'].map((name) => (
            <SideButton key={name}><Icon size={19}>{sideIcons[name]}</Icon></SideButton>
          ))}
        </SideBar>
        <Workspace>
          <TabRow>
            <Tab><SmallMark />Joint Loads (DEAD)</Tab>
            <TabTools>
              <Svg width="32" height="20" viewBox="0 0 32 20">
                <path d="M7 9.500H15L11 13.500Z" fill="#111" />
                <path d="M22.500 7.500L30 14.500M30 7.500L22.500 14.500" stroke="#111" strokeWidth="1.500" />
              </Svg>
            </TabTools>
          </TabRow>
          <ModelView />
        </Workspace>
      </Body>
      <StatusBar>
        <StatusText>2 Points Selected</StatusText>
        <NavButton><Svg width="13" height="12" viewBox="0 0 13 12"><path d="M1 6L6 1V4H12V8H6V11Z" fill="#56656f" stroke="#222" /></Svg></NavButton>
        <NavButton><Svg width="13" height="12" viewBox="0 0 13 12"><path d="M12 6L7 1V4H1V8H7V11Z" fill="#56656f" stroke="#222" /></Svg></NavButton>
        <Combo $w={94}>GLOBAL<Chevron /></Combo>
        <Combo $w={78}>Tonf, m, C<Chevron /></Combo>
      </StatusBar>
      <TaskBar>
        {taskIcons.map((task, i) => (
          <TaskButton key={i} $w={task.w} $open={task.open} $active={task.active}>
            {task.active ? <Mark size={24} /> : <Svg width="20" height="20" viewBox="0 0 20 20">{task.art}</Svg>}
          </TaskButton>
        ))}
        <Tray>
          <TrayItem $w={30}>
            <Svg width="15" height="16" viewBox="0 0 15 16" fill="none" stroke="#eee" strokeWidth="1.200"><circle cx="10.500" cy="3.500" r="2.500" /><circle cx="4.500" cy="8.500" r="2.200" /><path d="M1 15Q1 11 4.500 11T8 15M7.500 9Q8 6.500 10.500 6.500T14 10" /></Svg>
          </TrayItem>
          <TrayItem $w={37}><Svg width="12" height="8"><path d="M1 7L6 1.500L11 7" fill="none" stroke="#eee" strokeWidth="1.300" /></Svg></TrayItem>
          <TrayItem $w={8}><Svg width="16" height="10" viewBox="0 0 16 10"><path d="M3 9.500Q-1 8 1.500 5Q3 4 4 4Q7-2 11 3Q16 4 15 8Q15 9.500 13 9.500Z" fill="#f4f4f4" /><path d="M2 4.500Q8 2 15 8Q15 9.500 13 9.500H3Q-1 8 2 4.500Z" fill="#c9c9c9" /></Svg></TrayItem>
          <TrayItem $w={38}><Svg width="16" height="12" viewBox="0 0 16 12"><path d="M5 3H14V11H4V8M14.500 5.500H15.500V8.500M1 1V4H5V1M3 4V8" fill="none" stroke="#eee" strokeWidth="1.200" /><path d="M7 5H12.500V9H7Z" fill="#eee" /></Svg></TrayItem>
          <TrayItem $w={8}><Svg width="13" height="13" viewBox="0 0 13 13"><path d="M1 12Q1 2 12 1M4 12Q4 5 12 4M7 12Q7 8 12 7" fill="none" stroke="#ddd" strokeWidth="1.200" /><circle cx="11" cy="11" r="1.600" fill="#fff" /></Svg></TrayItem>
          <TrayItem $w={35}><Svg width="16" height="13" viewBox="0 0 16 13"><path d="M1 4.500H3L6.500 1.500V11.500L3 8.500H1ZM9 4Q11 6.500 9 9M11 2.500Q14 6.500 11 10.500M13 1Q17 6.500 13 12" fill="none" stroke="#eee" strokeWidth="1.100" /></Svg></TrayItem>
          <TrayItem $w={18}><Svg width="16" height="16" viewBox="0 0 16 16"><path d="M8 11L12 2Q14-1 15 3L10 11L7 13ZM9 7Q2 5 1 10T6 14Q9 14 10 8Q15 5 15 9T11 12" fill="none" stroke="#eee" strokeWidth="1.200" /></Svg></TrayItem>
          <TrayItem $w={44}>ENG</TrayItem>
          <Clock>11:14 PM<br />5/19/2020</Clock>
          <TrayItem $w={32}><Svg width="16" height="16" viewBox="0 0 16 16"><path d="M.7 1.500H15.300V12.500H9L7.500 14.500L6 12.500H.7Z" fill="none" stroke="#eee" strokeWidth="1.300" /></Svg></TrayItem>
        </Tray>
      </TaskBar>
    </Window>
  )
}

export default App
